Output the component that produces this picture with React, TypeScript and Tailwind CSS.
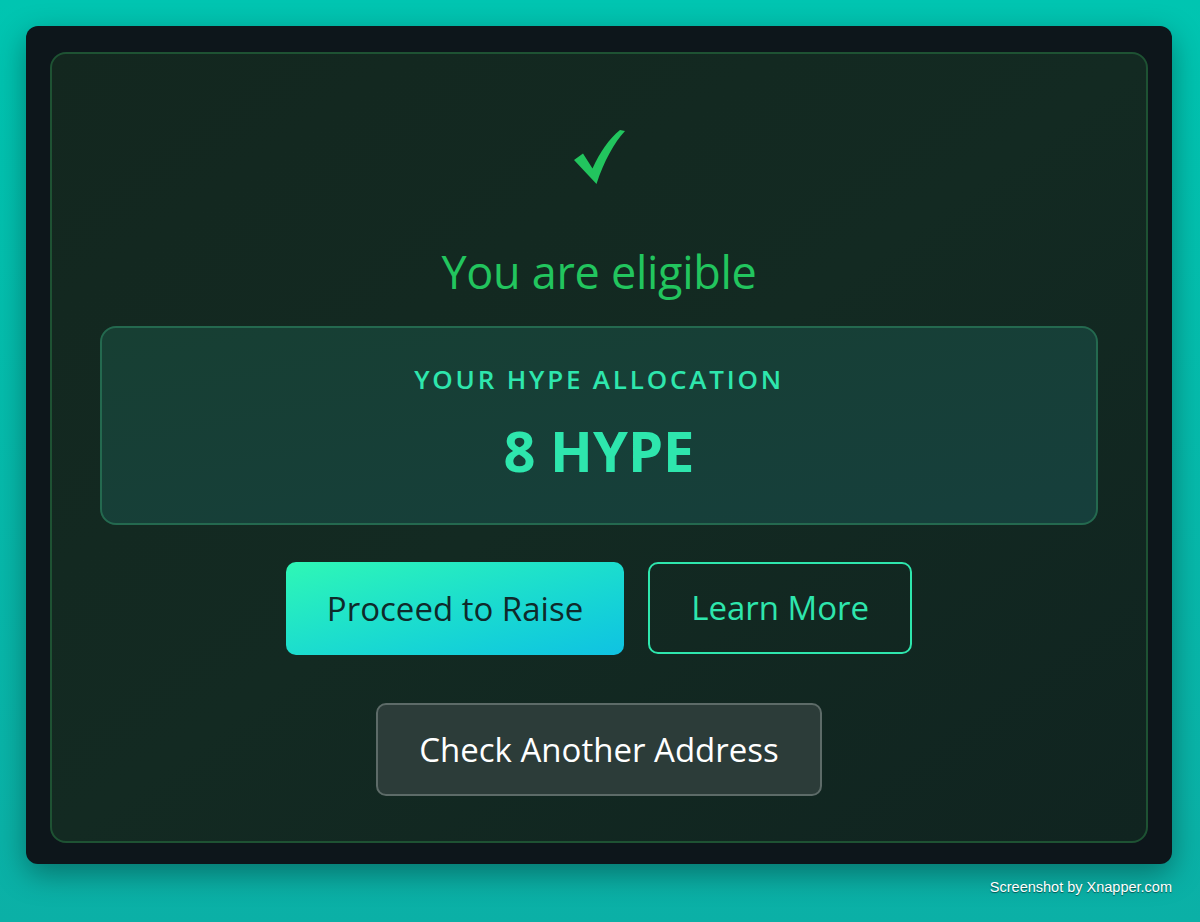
export default function App() {
  return (
    <div
      className="relative h-[922px] w-[1200px] overflow-hidden bg-gradient-to-b from-[#00c5b1] to-[#0bb0a6]"
      style={{ fontFamily: '"Open Sans", "Noto Sans", sans-serif' }}
    >
      <div className="pl-[26px] pt-[26px]">
        <div className="h-[838px] w-[1146px] rounded-[12px] bg-[#0d161b] pb-[21px] pl-[24px] pr-[24px] pt-[26px] shadow-[0_10px_30px_rgba(0,0,0,0.35)]">
          <div className="flex h-[791px] flex-col items-center rounded-[16px] border-2 border-[#1e5233] bg-gradient-to-br from-[#13271f] via-[#132a22] to-[#102420] px-[48px]">
            <svg className="mt-[74px] h-[56px] w-[52px]" viewBox="0 0 52 56">
              <path
                d="M1 32 L10 25.5 L19.5 40.5 C27 24 36 11 47 2 L52 3 C41 15 31 33 23.5 56 Z"
                fill="#22c55e"
              />
            </svg>
            <h1 className="mt-[62px] text-[45px] leading-[52px] font-normal tracking-[-0.3px] text-[#22c55e]">
              You are eligible
            </h1>
            <div className="mt-[28px] flex h-[199px] w-full flex-col items-center rounded-[16px] border-2 border-[#24694f] bg-gradient-to-br from-[#173f33] to-[#163f3c]">
              <p className="mt-[33px] text-[26px] leading-[36px] font-semibold tracking-[2.8px] text-[#2ee6ad]">
                YOUR HYPE ALLOCATION
              </p>
              <p className="mt-[21px] text-[56px] leading-[64px] font-bold text-[#2ee6ad]">
                8 HYPE
              </p>
            </div>
            <div className="mt-[37px] flex gap-[24px]">
              <button className="h-[93px] rounded-[10px] bg-gradient-to-br from-[#2ff7b5] to-[#10c2e2] px-[41px] text-[33px] text-[#0f2a2b]">
                Proceed to Raise
              </button>
              <button className="h-[92px] rounded-[10px] border-2 border-[#2ee6ad] px-[41px] text-[33px] text-[#2ee6ad]">
                Learn More
              </button>
            </div>
            <button className="mt-[48px] h-[93px] rounded-[10px] border-2 border-[#5d6b68] bg-[#2c3c39] px-[41px] text-[33px] text-white">
              Check Another Address
            </button>
          </div>
        </div>
      </div>
      <div
        className="absolute right-[28px] top-[877px] text-[14.5px] text-white [text-shadow:0_1px_1px_rgba(0,0,0,0.5)]"
        style={{ fontFamily: '"Liberation Sans", sans-serif' }}
      >
        Screenshot by Xnapper.com
      </div>
    </div>
  );
}
